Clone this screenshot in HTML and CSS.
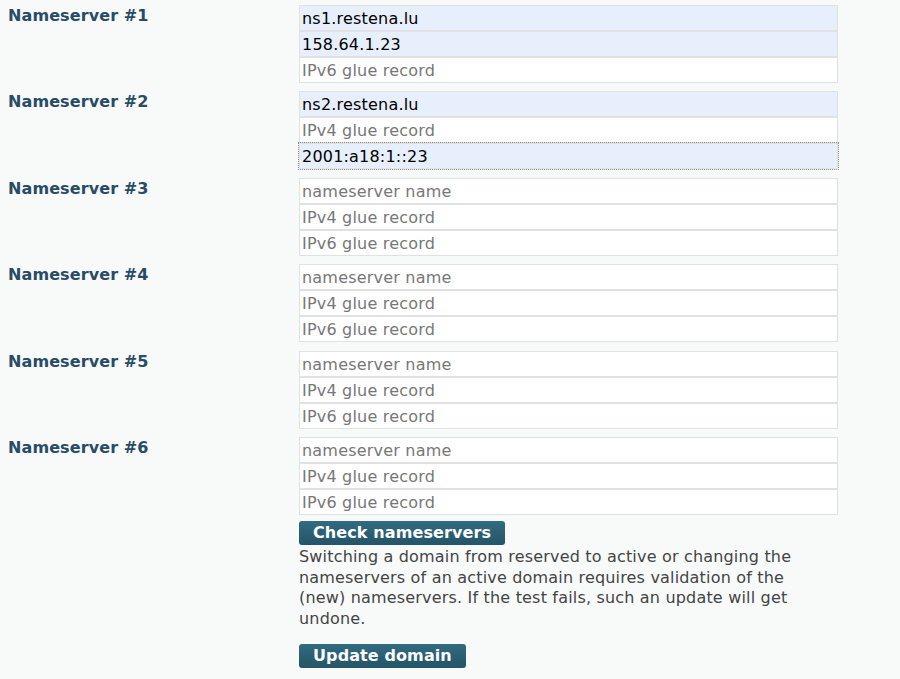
FILE: index.html
```html
<!DOCTYPE html>
<html>
<head>
<meta charset="utf-8">
<link rel="stylesheet" href="styles.css">
</head>
<body>
<form class="ns-form">
  <div class="ns-row">
    <div class="ns-label">Nameserver #1</div>
    <div class="ns-fields">
      <input class="field filled" type="text" value="ns1.restena.lu" placeholder="nameserver name">
      <input class="field filled" type="text" value="158.64.1.23" placeholder="IPv4 glue record">
      <input class="field" type="text" placeholder="IPv6 glue record">
    </div>
  </div>
  <div class="ns-row">
    <div class="ns-label">Nameserver #2</div>
    <div class="ns-fields">
      <input class="field filled" type="text" value="ns2.restena.lu" placeholder="nameserver name">
      <input class="field" type="text" placeholder="IPv4 glue record">
      <input class="field filled focused" type="text" value="2001:a18:1::23" placeholder="IPv6 glue record">
    </div>
  </div>
  <div class="ns-row">
    <div class="ns-label">Nameserver #3</div>
    <div class="ns-fields">
      <input class="field" type="text" placeholder="nameserver name">
      <input class="field" type="text" placeholder="IPv4 glue record">
      <input class="field" type="text" placeholder="IPv6 glue record">
    </div>
  </div>
  <div class="ns-row">
    <div class="ns-label">Nameserver #4</div>
    <div class="ns-fields">
      <input class="field" type="text" placeholder="nameserver name">
      <input class="field" type="text" placeholder="IPv4 glue record">
      <input class="field" type="text" placeholder="IPv6 glue record">
    </div>
  </div>
  <div class="ns-row">
    <div class="ns-label">Nameserver #5</div>
    <div class="ns-fields">
      <input class="field" type="text" placeholder="nameserver name">
      <input class="field" type="text" placeholder="IPv4 glue record">
      <input class="field" type="text" placeholder="IPv6 glue record">
    </div>
  </div>
  <div class="ns-row">
    <div class="ns-label">Nameserver #6</div>
    <div class="ns-fields">
      <input class="field" type="text" placeholder="nameserver name">
      <input class="field" type="text" placeholder="IPv4 glue record">
      <input class="field" type="text" placeholder="IPv6 glue record">
    </div>
  </div>
  <div class="ns-actions">
    <button class="btn btn-check" type="button">Check nameservers</button>
    <p class="note">Switching a domain from reserved to active or changing the nameservers of an active domain requires validation of the (new) nameservers. If the test fails, such an update will get undone.</p>
    <button class="btn" type="button">Update domain</button>
  </div>
</form>
</body>
</html>
```

FILE: styles.css
```css
html, body {
  margin: 0;
  background: #f8fafa;
}
body {
  padding: 5px 8px 0 8px;
  font-family: "DejaVu Sans", Verdana, sans-serif;
  font-size: 16px;
}
.ns-form {
  display: flex;
  flex-direction: column;
  gap: 8.4px;
}
.ns-row {
  display: grid;
  grid-template-columns: 291px 539px;
}
.ns-label {
  font-weight: bold;
  color: #284b66;
  padding-top: 1px;
  line-height: 20px;
  letter-spacing: 0.1px;
}
.ns-fields {
  display: flex;
  flex-direction: column;
}
.field {
  box-sizing: border-box;
  width: 539px;
  height: 26px;
  margin: 0;
  padding: 1px 1px 0 2px;
  border: 1px solid #e0e1e1;
  background: #ffffff;
  font-family: "DejaVu Sans", Verdana, sans-serif;
  font-size: 16px;
  letter-spacing: 0.2px;
  color: #000;
  outline: none;
}
.field::placeholder {
  color: #777;
  opacity: 1;
}
.field.filled {
  background: #e8effc;
}
.field.focused {
  outline: 1px dotted #8c8c8c;
  outline-offset: 0;
}
.ns-actions {
  margin-left: 291px;
  display: flex;
  flex-direction: column;
  align-items: flex-start;
  margin-top: -2.4px;
}
.btn {
  font-family: "DejaVu Sans", Verdana, sans-serif;
  font-size: 16px;
  font-weight: bold;
  line-height: 18px;
  letter-spacing: 0.1px;
  color: #fff;
  border: none;
  border-radius: 3px;
  padding: 3px 14px 3px 14px;
  background: linear-gradient(#326b80, #245467);
  cursor: pointer;
}
.note {
  margin: 2px 0 14px 0;
  width: 510px;
  color: #444;
  line-height: 20.7px;
  letter-spacing: 0.18px;
}
```
